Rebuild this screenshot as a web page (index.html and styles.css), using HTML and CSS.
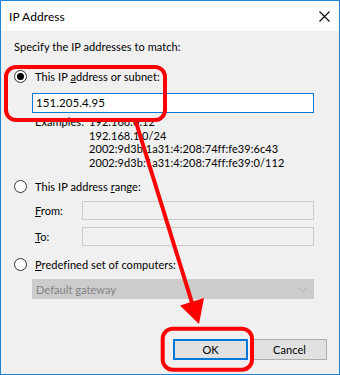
FILE: index.html
```html
<!DOCTYPE html>
<html>
<head>
<meta charset="utf-8">
<link rel="stylesheet" href="styles.css">
</head>
<body>
<div class="window">
  <div class="titlebar">
    <span class="title">IP Address</span>
    <svg class="close" width="11" height="11" viewBox="0 0 11 11"><path d="M0.5 0.5 L10.5 10.5 M10.5 0.5 L0.5 10.5" stroke="#000" stroke-width="1.1" fill="none"/></svg>
  </div>
  <div class="content">
    <div class="instr">Specify the IP addresses to match:</div>

    <div class="radio-row r1"><span class="radio checked"></span><span>This IP <u>a</u>ddress or subnet:</span></div>
    <div class="textbox active">151.205.4.95</div>
    <div class="examples">
      <span class="ex-label">Examples:</span>
      <div class="ex-values">
        <div>192.168.0.12</div>
        <div>192.168.1.0/24</div>
        <div>2002:9d3b:1a31:4:208:74ff:fe39:6c43</div>
        <div>2002:9d3b:1a31:4:208:74ff:fe39:0/112</div>
      </div>
    </div>

    <div class="radio-row r2"><span class="radio"></span><span>This IP address <u>r</u>ange:</span></div>
    <div class="range-row from"><span class="range-label"><u>F</u>rom:</span><div class="textbox disabled"></div></div>
    <div class="range-row to"><span class="range-label"><u>T</u>o:</span><div class="textbox disabled"></div></div>

    <div class="radio-row r3"><span class="radio"></span><span><u>P</u>redefined set of computers:</span></div>
    <div class="select">
      <span>Default gateway</span>
      <svg width="11" height="7" viewBox="0 0 11 7"><path d="M0.5 0.5 L5.5 5.5 L10.5 0.5" stroke="#b4b4b4" stroke-width="1" fill="none"/></svg>
    </div>

    <div class="buttons">
      <div class="btn default">OK</div>
      <div class="btn">Cancel</div>
    </div>
  </div>

  <svg class="annot" width="340" height="375" viewBox="0 0 340 375">
    <rect x="6" y="67" width="159" height="53" rx="10" ry="10" fill="none" stroke="#f00" stroke-width="4"/>
    <rect x="162.7" y="328.7" width="89.3" height="41" rx="10" ry="10" fill="none" stroke="#f00" stroke-width="4"/>
    <line x1="135" y1="119" x2="193" y2="306" stroke="#f00" stroke-width="4"/>
    <polygon points="199,324 180,305.5 204,298" fill="#f00"/>
  </svg>
</div>
</body>
</html>
```

FILE: styles.css
```css
html, body {
  margin: 0;
  padding: 0;
  background: #fff;
}

body {
  font-family: Lato, "Liberation Sans", Arial, sans-serif;
  font-size: 11px;
  letter-spacing: 0.06px;
  color: #000;
}

.window {
  position: relative;
  width: 340px;
  height: 375px;
  box-sizing: border-box;
  border: 1px solid #1883d7;
  background: #f0f0f0;
  display: flex;
  flex-direction: column;
  overflow: hidden;
}

.titlebar {
  height: 30px;
  flex: none;
  background: #fff;
  display: flex;
  align-items: center;
  padding-left: 8px;
  padding-right: 9px;
}

.title {
  font-size: 12px;
  line-height: 15px;
  margin-top: 1px;
}

.close {
  margin-left: auto;
  margin-top: 1px;
}

.content {
  padding-left: 13px;
  display: flex;
  flex-direction: column;
}

.instr {
  margin-top: 8px;
  line-height: 15px;
}

.radio-row {
  display: flex;
  align-items: center;
  height: 15px;
  gap: 8px;
}

.r1 { margin-top: 15px; }
.r2 { margin-top: 10px; }
.r3 { margin-top: 11px; }

.radio {
  width: 13px;
  height: 13px;
  box-sizing: border-box;
  border: 1px solid #333;
  border-radius: 50%;
  background: #fff;
  display: flex;
  align-items: center;
  justify-content: center;
}

.radio.checked::after {
  content: "";
  width: 7px;
  height: 7px;
  border-radius: 50%;
  background: #000;
}

.textbox {
  box-sizing: border-box;
  height: 20px;
  background: #fff;
  border: 1px solid #7a7a7a;
  line-height: 18px;
  padding-left: 3px;
  font-size: 11.5px;
}

.textbox.active {
  margin-top: 9px;
  margin-left: 18px;
  width: 282px;
  border-color: #0078d7;
}

.examples {
  margin-top: 2px;
  margin-left: 21px;
  display: flex;
  line-height: 13.5px;
}

.ex-label {
  width: 54px;
}

.range-row {
  display: flex;
  align-items: center;
  margin-left: 21px;
  height: 19px;
}

.range-row.from { margin-top: 7px; }
.range-row.to { margin-top: 7px; }

.range-label {
  width: 47px;
}

.textbox.disabled {
  width: 232px;
  height: 19px;
  background: #f0f0f0;
  border-color: #cccccc;
}

.select {
  margin-top: 7px;
  margin-left: 18px;
  width: 282px;
  height: 20px;
  box-sizing: border-box;
  background: #cccccc;
  border: 1px solid #cccccc;
  color: #838383;
  display: flex;
  align-items: center;
  justify-content: space-between;
  padding-left: 3px;
  padding-right: 5px;
}

.buttons {
  margin-top: 40px;
  display: flex;
  justify-content: flex-end;
  gap: 4px;
  padding-right: 12px;
}

.btn {
  width: 75px;
  height: 21px;
  box-sizing: border-box;
  border: 1px solid #adadad;
  background: #e1e1e1;
  display: flex;
  align-items: center;
  justify-content: center;
}

.btn.default {
  border: 2px solid #0078d7;
}

.annot {
  position: absolute;
  left: -1px;
  top: -1px;
  pointer-events: none;
}
```
